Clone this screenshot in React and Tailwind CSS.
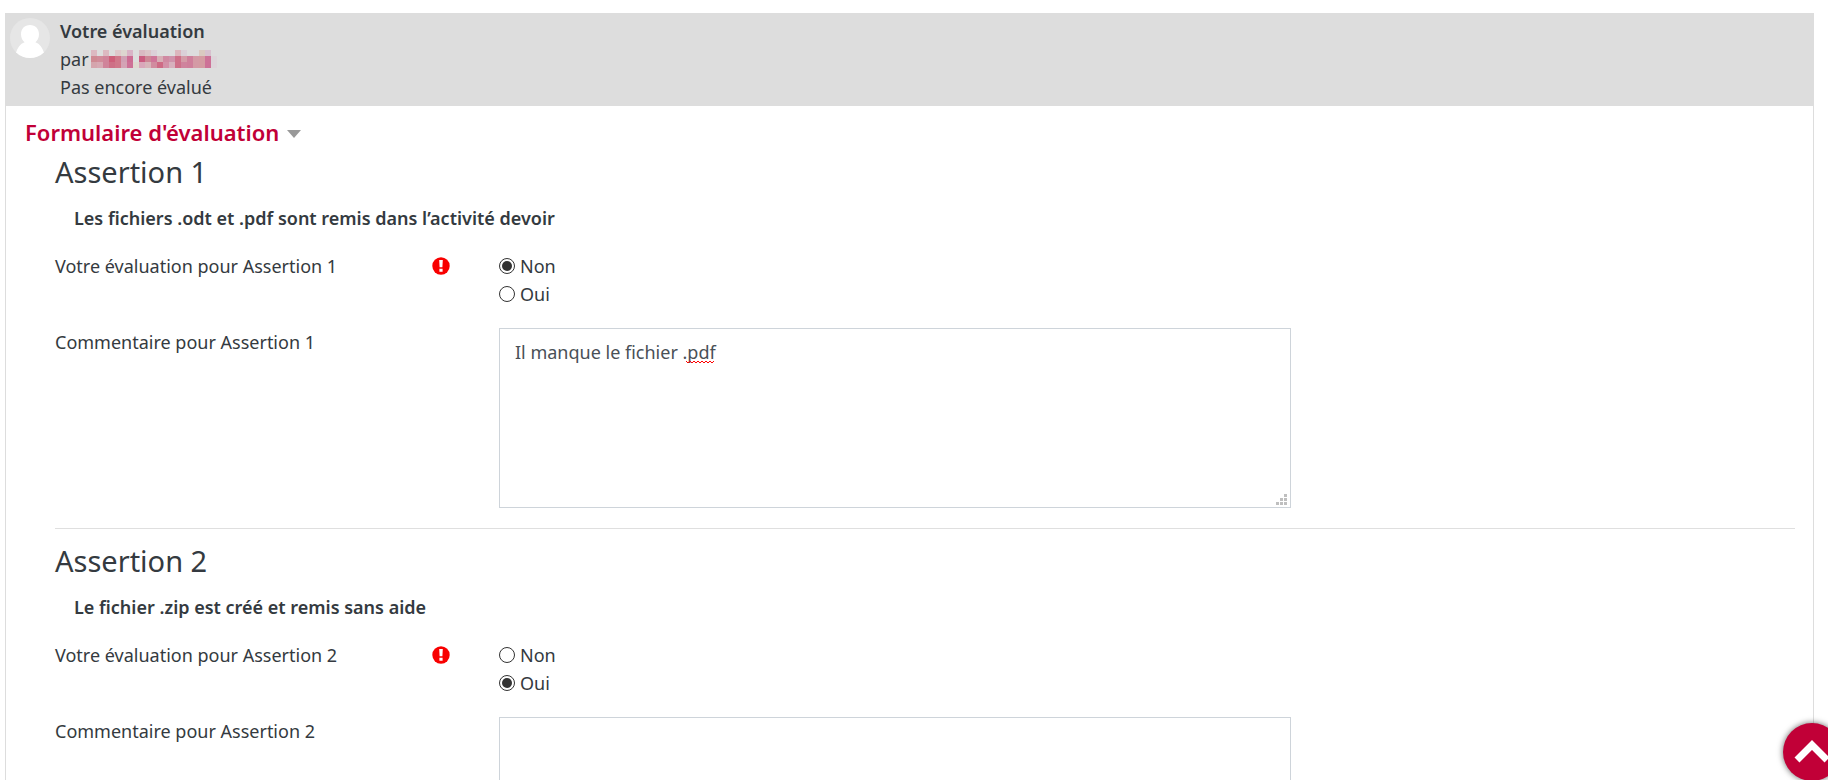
const MOSAIC = [
  ['#dcb9c1', '', '#dcb9c1', '', '#dfc8cb', '#ddd5cf', '#d9b3c6', '', '#d9b9c2', '#dcc4c8', '#dbd0d8', '', '', '', '#dcb6bd', '#dad0d8', '', '', '#dac9c0', '#d7c1cf', ''],
  ['#cf8a93', '#d18c9a', '#d0849a', '#ce5f79', '#d0788a', '#d0a0b4', '#cd6c93', '', '#cb5c80', '#cd8796', '#cf7599', '#d7afb6', '#d08aa2', '#cf93ab', '#ce7089', '#d49ba7', '#cf7f9b', '#d49aa5', '#d49ba2', '#cd7197', '#ddd5da'],
  ['#d5a5ad', '#d7a9b3', '#d0849a', '#ce7086', '#d0788a', '#d4a3b5', '#cd7197', '#dfd9d0', '#d9a7ba', '#d7b5ba', '#d18c9f', '#ce6b85', '#d391a8', '#d7b0bd', '#ce7089', '#cf839d', '#cf7f9b', '#d49aa5', '#d49ba2', '#cd7197', '#ddd5da'],
];

const ASSERTIONS = [
  {
    id: 1,
    description: 'Les fichiers .odt et .pdf sont remis dans l’activité devoir',
    grade: 'Non',
    comment: 'Il manque le fichier .pdf',
  },
  {
    id: 2,
    description: 'Le fichier .zip est créé et remis sans aide',
    grade: 'Oui',
    comment: '',
  },
];

function Avatar() {
  return (
    <svg viewBox="0 0 40 40" className="size-10 shrink-0" aria-hidden="true">
      <defs>
        <clipPath id="avatar-clip">
          <circle cx="20" cy="20" r="20" />
        </clipPath>
      </defs>
      <circle cx="20" cy="20" r="20" fill="#e6e6e6" />
      <g clipPath="url(#avatar-clip)" fill="#fff">
        <path d="M20 7c5.400 0 9 3.800 9 9.200 0 3.600-1.500 6.300-3.600 8 4.400 1.600 7 5.400 8.600 10.800V40H6v-5c1.600-5.400 4.200-9.200 8.600-10.800-2.100-1.700-3.600-4.400-3.600-8C11 10.800 14.600 7 20 7z" />
      </g>
    </svg>
  );
}

function MaskedName() {
  return (
    <a href="#profil" aria-label="Profil" className="ml-0.5">
      <svg width="126" height="18" viewBox="0 0 126 18" shapeRendering="crispEdges" aria-hidden="true">
        {MOSAIC.map((row, y) =>
          row.map((fill, x) =>
            fill ? <rect key={x + '-' + y} x={x * 6} y={y * 6} width="6" height="6" fill={fill} /> : null
          )
        )}
      </svg>
    </a>
  );
}

function RequiredIcon() {
  return (
    <svg viewBox="0 0 18 18" className="mt-[5px] size-[18px] shrink-0" role="img" aria-label="Requis">
      <circle cx="9" cy="9" r="8.700" fill="#f80000" />
      <path d="M7.200 3h3.600l-.4 7.300H7.600zM7.400 11.800h3.200v2.900H7.400z" fill="#fff" />
    </svg>
  );
}

function Choice({ name, label, checked }) {
  return (
    <label className="flex items-center gap-[5px]">
      <input
        type="radio"
        name={name}
        defaultChecked={checked}
        className="size-4 appearance-none rounded-full border border-[#333] bg-white bg-clip-content p-[2px] checked:bg-[#333]"
      />
      {label}
    </label>
  );
}

function CommentBox({ id, comment }) {
  return (
    <div className="relative w-[792px] max-w-full">
      <textarea
        id={id}
        defaultValue={comment}
        spellCheck={false}
        className="block h-[180px] w-full resize-none border border-[#ced4da] bg-white px-[15px] py-[9px] text-[#495057] outline-none"
      />
      {comment && (
        <svg width="29" height="4" viewBox="0 0 29 4" className="absolute left-[187px] top-8" aria-hidden="true">
          <path
            d="M0 1l2 2 2-2 2 2 2-2 2 2 2-2 2 2 2-2 2 2 2-2 2 2 2-2 2 2 2-2"
            fill="none"
            stroke="#f00"
          />
        </svg>
      )}
      <svg
        width="11"
        height="11"
        viewBox="0 0 11 11"
        fill="#bfbfbf"
        shapeRendering="crispEdges"
        className="absolute bottom-[3px] right-1"
        aria-hidden="true"
      >
        <path d="M8 0h3v3H8zM4 4h3v3H4zM8 4h3v3H8zM0 8h3v3H0zM4 8h3v3H4zM8 8h3v3H8z" />
      </svg>
    </div>
  );
}

function Assertion({ id, description, grade, comment }) {
  return (
    <section>
      <h3 className="text-[29px] leading-9">Assertion {id}</h3>
      <p className="mt-3.5 pl-[19px] font-semibold">{description}</p>
      <div role="radiogroup" aria-labelledby={'grade-label-' + id} className="mt-5 flex">
        <div className="flex w-1/4 shrink-0 justify-between pr-10">
          <span id={'grade-label-' + id}>Votre évaluation pour Assertion {id}</span>
          <RequiredIcon />
        </div>
        <div className="flex-1 pl-[9px]">
          <Choice name={'grade-' + id} label="Non" checked={grade === 'Non'} />
          <Choice name={'grade-' + id} label="Oui" checked={grade === 'Oui'} />
        </div>
      </div>
      <div className="mt-5 flex">
        <label htmlFor={'comment-' + id} className="w-1/4 shrink-0">
          Commentaire pour Assertion {id}
        </label>
        <div className="min-w-0 flex-1 pl-[9px]">
          <CommentBox id={'comment-' + id} comment={comment} />
        </div>
      </div>
    </section>
  );
}

export default function App() {
  return (
    <div className="bg-white pt-[13px] pr-[14px] pl-[5px] font-['Noto_Sans',sans-serif] text-lg leading-7 text-[#343a40]">
      <main className="border border-t-0 border-[#ddd]">
        <header className="flex gap-[10px] bg-[#ddd] px-1 pt-1 pb-[5px]">
          <div className="pt-px">
            <Avatar />
          </div>
          <div>
            <h1 className="font-semibold">Votre évaluation</h1>
            <div className="flex items-center">
              par
              <MaskedName />
            </div>
            <div>Pas encore évalué</div>
          </div>
        </header>
        <form className="pt-2.5 pr-[18px] pb-5 pl-[19px]">
          <h2>
            <button type="button" className="flex items-center gap-2 text-[22px] leading-8 font-semibold text-[#c10037]">
              Formulaire d'évaluation
              <svg width="14" height="8" viewBox="0 0 14 8" className="mt-1" aria-hidden="true">
                <path d="M0 0h14L7 8z" fill="#999" />
              </svg>
            </button>
          </h2>
          <div className="pt-1.5 pl-[30px]">
            {ASSERTIONS.map((item, index) => (
              <div key={item.id}>
                {index > 0 && <hr className="mt-5 mb-3.5 border-[#dfdfdf]" />}
                <Assertion {...item} />
              </div>
            ))}
          </div>
        </form>
      </main>
      <a
        href="#top"
        aria-label="Haut de page"
        className="fixed -right-[13px] -bottom-px flex size-[58px] items-center justify-center rounded-full bg-[#c10037] shadow-[0_0_6px_rgba(0,0,0,0.6)]"
      >
        <svg width="36" height="24" viewBox="0 0 36 24" aria-hidden="true">
          <path d="M3 20L18 5l15 15" fill="none" stroke="#fff" strokeWidth="7" />
        </svg>
      </a>
    </div>
  );
}
